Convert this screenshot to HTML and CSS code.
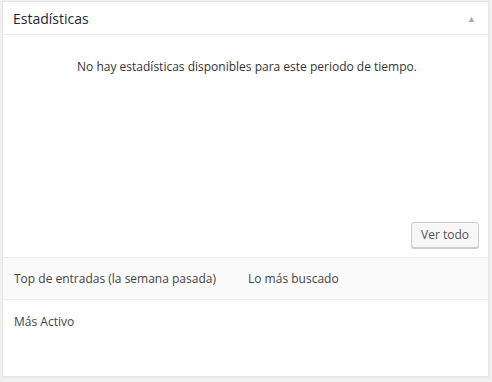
FILE: index.html
```html
<!DOCTYPE html>
<html lang="es">
<head>
    <meta charset="UTF-8">
    <title>Estadísticas</title>
    <link rel="stylesheet" href="styles.css">
</head>
<body>
    <div class="postbox">
        <div class="postbox-header">
            <h2>Estadísticas</h2>
            <span class="toggle">&#9650;</span>
        </div>
        <div class="inside">
            <p class="empty">No hay estadísticas disponibles para este periodo de tiempo.</p>
            <div class="actions">
                <a class="button" href="#">Ver todo</a>
            </div>
        </div>
        <div class="tabs">
            <span class="tab tab-wide">Top de entradas (la semana pasada)</span>
            <span class="tab">Lo más buscado</span>
        </div>
        <div class="section">
            <span>Más Activo</span>
        </div>
    </div>
</body>
</html>
```

FILE: styles.css
```css
body {
    margin: 0;
    padding: 1px 3px 5px 2px;
    background-color: #f1f1f1;
    font-family: "Open Sans", sans-serif;
    font-size: 12px;
    color: #444;
}
.postbox {
    background-color: #fff;
    border: 1px solid #e5e5e5;
    box-shadow: 0 1px 1px rgba(0, 0, 0, 0.04);
    height: 374px;
    display: flex;
    flex-direction: column;
}
.postbox-header {
    display: flex;
    align-items: center;
    justify-content: space-between;
    height: 32px;
    padding: 0 12px 0 10px;
    border-bottom: 1px solid #eee;
}
.postbox-header h2 {
    margin: 0;
    font-size: 14px;
    font-weight: 400;
    color: #23282d;
}
.toggle {
    font-size: 9px;
    color: #aaa;
}
.inside {
    padding: 0 9px 9px 12px;
}
.empty {
    margin: 23px 0 0;
    text-align: center;
    color: #333;
}
.actions {
    margin-top: 147px;
    display: flex;
    justify-content: flex-end;
}
.button {
    display: inline-block;
    padding: 4px 9px;
    height: 16px;
    line-height: 16px;
    font-size: 12px;
    color: #555;
    background-color: #f7f7f7;
    border: 1px solid #ccc;
    border-radius: 3px;
    box-shadow: 0 1px 0 #ccc;
    text-decoration: none;
}
.tabs {
    display: flex;
    align-items: center;
    height: 41px;
    padding: 0 11px;
    background-color: #fafafa;
    border-top: 1px solid #eee;
    border-bottom: 1px solid #eee;
}
.tab-wide {
    width: 234px;
}
.section {
    padding: 13px 11px;
}
```
